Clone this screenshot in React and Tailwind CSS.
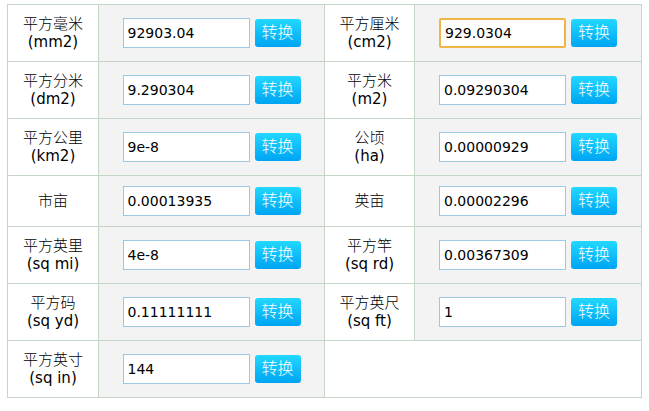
import React, { useState } from 'react';

const rows = [
  [
    { name: '平方毫米', unit: '(mm2)', value: '92903.04' },
    { name: '平方厘米', unit: '(cm2)', value: '929.0304', focused: true },
  ],
  [
    { name: '平方分米', unit: '(dm2)', value: '9.290304' },
    { name: '平方米', unit: '(m2)', value: '0.09290304' },
  ],
  [
    { name: '平方公里', unit: '(km2)', value: '9e-8' },
    { name: '公顷', unit: '(ha)', value: '0.00000929' },
  ],
  [
    { name: '市亩', value: '0.00013935' },
    { name: '英亩', value: '0.00002296' },
  ],
  [
    { name: '平方英里', unit: '(sq mi)', value: '4e-8' },
    { name: '平方竿', unit: '(sq rd)', value: '0.00367309' },
  ],
  [
    { name: '平方码', unit: '(sq yd)', value: '0.11111111' },
    { name: '平方英尺', unit: '(sq ft)', value: '1' },
  ],
  [{ name: '平方英寸', unit: '(sq in)', value: '144' }],
];

const LabelCell = ({ name, unit }) => (
  <td className="border border-[#c6d6c6] bg-white py-[10px] text-center align-middle leading-[18px] text-[15px] text-black">
    <div className="font-light">{name}</div>
    {unit && <div>{unit}</div>}
  </td>
);

const InputCell = ({ value, focused }) => {
  const [val, setVal] = useState(value);
  return (
    <td className="border border-[#c6d6c6] bg-[#f3f3f3] py-[10px] align-middle">
      <div className="flex items-center justify-center">
        <input
          type="text"
          value={val}
          onChange={(e) => setVal(e.target.value)}
          className={`h-[30px] w-[127px] bg-white px-[4px] text-[14px] text-black outline-none ${
            focused ? 'rounded-[2px] border-2 border-[#efb548] px-[3px]' : 'border border-[#9dc8e4]'
          }`}
        />
        <button className="ml-[5px] h-[28px] w-[46px] rounded-[3px] bg-gradient-to-b from-[#22d8ff] to-[#00a4f2] text-[16px] font-light leading-[28px] text-white">
          转换
        </button>
      </div>
    </td>
  );
};

export default function App() {
  return (
    <div
      className="min-h-[411px] w-[649px] bg-white pl-[7px] pt-[4px]"
      style={{ fontFamily: '"DejaVu Sans", "Noto Sans CJK SC", sans-serif' }}
    >
      <table className="w-[634px] table-fixed border-collapse">
        <colgroup>
          <col className="w-[91px]" />
          <col className="w-[226px]" />
          <col className="w-[90px]" />
          <col className="w-[227px]" />
        </colgroup>
        <tbody>
          {rows.map((row, i) => (
            <tr key={i}>
              {row.map((cell) => (
                <React.Fragment key={cell.name}>
                  <LabelCell name={cell.name} unit={cell.unit} />
                  <InputCell value={cell.value} focused={cell.focused} />
                </React.Fragment>
              ))}
              {row.length === 1 && <td colSpan={2} className="border border-[#c6d6c6] bg-white" />}
            </tr>
          ))}
        </tbody>
      </table>
    </div>
  );
}
